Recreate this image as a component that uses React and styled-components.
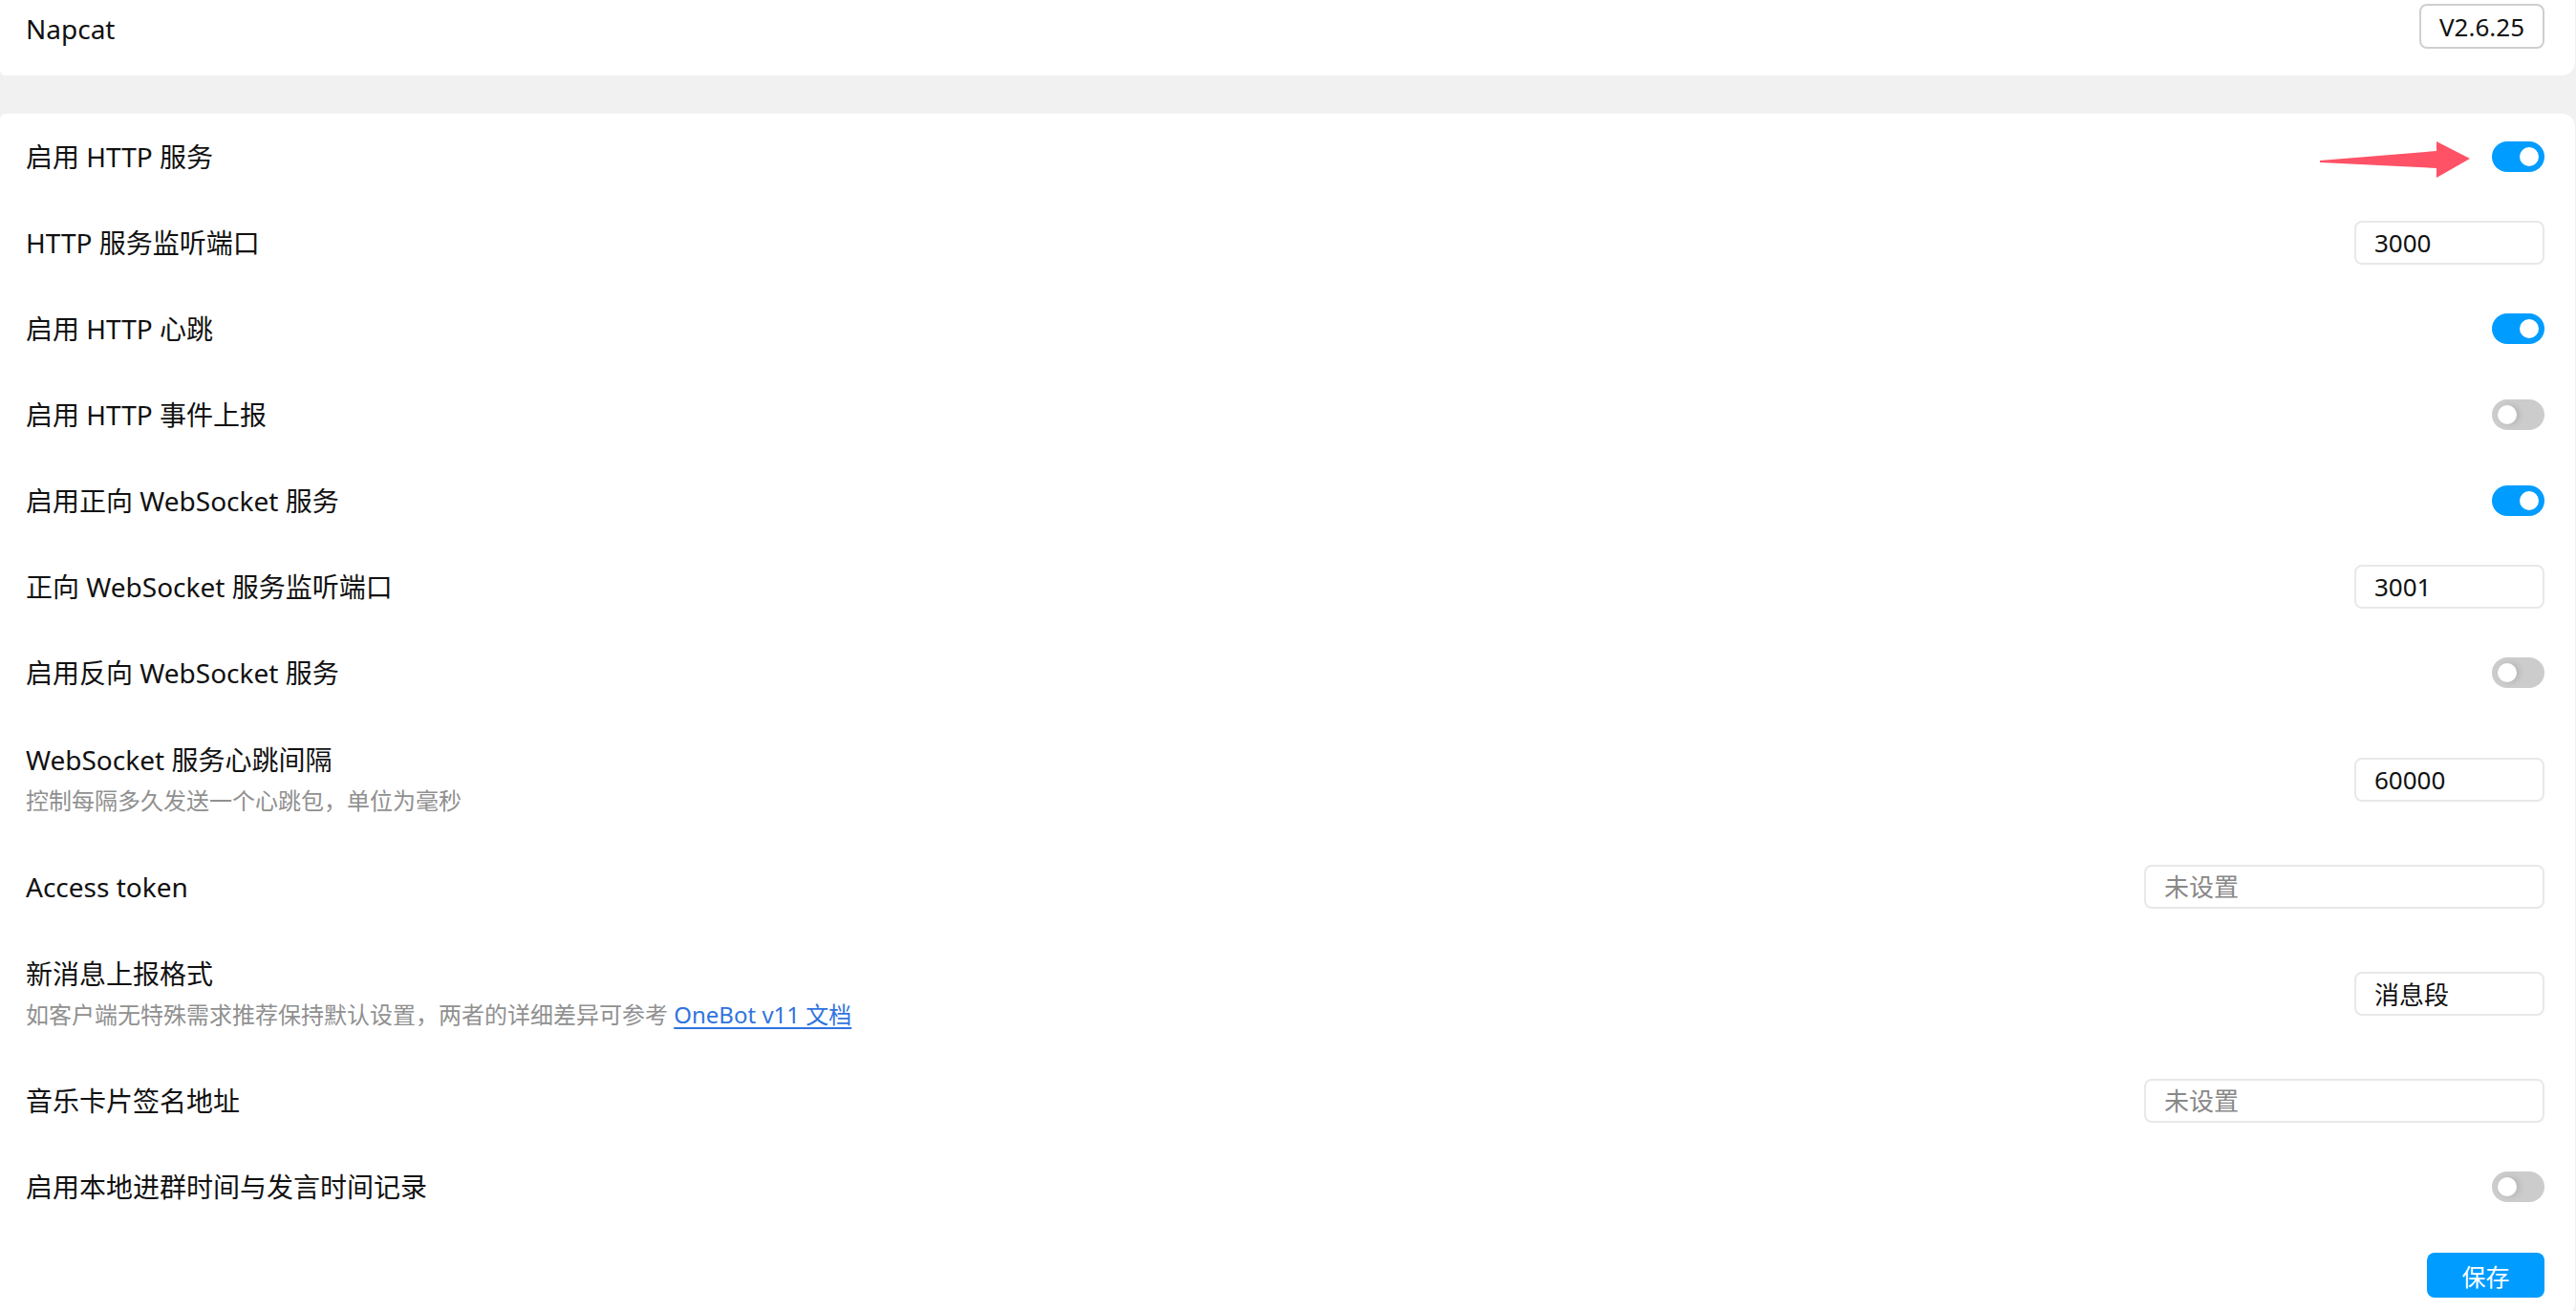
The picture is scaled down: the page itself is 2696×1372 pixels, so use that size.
// Imports
import React from "react";
import styled, { createGlobalStyle } from "styled-components";

// Settings data
const rows = [
	{ label: "启用 HTTP 服务", type: "toggle", on: true, arrow: true },
	{ label: "HTTP 服务监听端口", type: "input", value: "3000" },
	{ label: "启用 HTTP 心跳", type: "toggle", on: true },
	{ label: "启用 HTTP 事件上报", type: "toggle", on: false },
	{ label: "启用正向 WebSocket 服务", type: "toggle", on: true },
	{ label: "正向 WebSocket 服务监听端口", type: "input", value: "3001" },
	{ label: "启用反向 WebSocket 服务", type: "toggle", on: false },
	{
		label: "WebSocket 服务心跳间隔",
		desc: "控制每隔多久发送一个心跳包，单位为毫秒",
		type: "input",
		value: "60000",
	},
	{ label: "Access token", type: "input", placeholder: "未设置", wide: true },
	{
		label: "新消息上报格式",
		desc: "如客户端无特殊需求推荐保持默认设置，两者的详细差异可参考 ",
		link: "OneBot v11 文档",
		type: "input",
		value: "消息段",
	},
	{ label: "音乐卡片签名地址", type: "input", placeholder: "未设置", wide: true },
	{ label: "启用本地进群时间与发言时间记录", type: "toggle", on: false },
];

// Component
const App = () => {
	return (
		<React.Fragment>
			<GlobalStyle />
			<Page>
				<HeaderCard>
					<AppName>Napcat</AppName>
					<Version>V2.6.25</Version>
				</HeaderCard>
				<Card>
					{rows.map((row) => (
						<Row key={row.label} $double={!!row.desc}>
							<Label>
								<Title>{row.label}</Title>
								{row.desc && (
									<Desc>
										{row.desc}
										{row.link && <DocLink href="#">{row.link}</DocLink>}
									</Desc>
								)}
							</Label>
							{row.type === "toggle" ? (
								<Toggle $on={row.on}>
									<Knob $on={row.on} />
								</Toggle>
							) : (
								<TextInput
									$wide={row.wide}
									defaultValue={row.value}
									placeholder={row.placeholder}
								/>
							)}
							{/* red pointer drawn over the first row */}
							{row.arrow && (
								<Arrow width="157" height="38" viewBox="0 0 157 38">
									<polygon
										points="0,20 122,10 122,0 157,18 122,38 122,28 0,22"
										fill="#ff5266"
									/>
								</Arrow>
							)}
						</Row>
					))}
					<Actions>
						<SaveButton>保存</SaveButton>
					</Actions>
				</Card>
			</Page>
		</React.Fragment>
	);
};

// Styled
const GlobalStyle = createGlobalStyle`
	html, body{
		margin: 0;
		height: 100%;
		overflow: hidden;
		background: #f1f1f1;
	}
	body{
		font-family: "Noto Sans", "Noto Sans CJK SC", sans-serif;
		color: #111;
	}
	*{
		box-sizing: border-box;
	}
`;

const Page = styled.div`
	display: flex;
	flex-direction: column;
	gap: 40px;
	padding-right: 1px;
	min-height: 100vh;
`;

const Card = styled.div`
	background: #fff;
	border-radius: 6px 14px 14px 6px;
	flex: 1;
`;

const HeaderCard = styled(Card)`
	flex: none;
	height: 79px;
	display: flex;
	align-items: center;
	justify-content: space-between;
	padding: 0 32px 24px 27px;
	border-radius: 0 0 14px 6px;
`;

const AppName = styled.div`
	font-size: 28px;
	line-height: 44px;
	padding-top: 4px;
`;

const Version = styled.div`
	width: 131px;
	height: 47px;
	display: flex;
	align-items: center;
	justify-content: center;
	border: 2px solid #cfcfcf;
	border-radius: 8px;
	font-size: 26px;
`;

const Row = styled.div`
	position: relative;
	display: flex;
	align-items: center;
	justify-content: space-between;
	min-height: 90px;
	padding: ${(p) => (p.$double ? "24px" : "22px")} 32px;
	padding-left: 27px;
`;

const Label = styled.div`
	display: flex;
	flex-direction: column;
`;

const Title = styled.div`
	font-size: 28px;
	line-height: 44px;
`;

const Desc = styled.div`
	font-size: 24px;
	line-height: 42px;
	color: #909090;
`;

const DocLink = styled.a`
	color: #2f74e0;
	text-decoration: underline;
	text-underline-offset: 4px;
`;

const Toggle = styled.div`
	width: 55px;
	height: 32px;
	border-radius: 16px;
	background: ${(p) => (p.$on ? "#009cff" : "#cccccc")};
	display: flex;
	align-items: center;
	justify-content: ${(p) => (p.$on ? "flex-end" : "flex-start")};
	padding: 0 6px;
`;

const Knob = styled.div`
	width: 20px;
	height: 20px;
	border-radius: 50%;
	background: #fff;
	box-shadow: ${(p) => (p.$on ? "none" : "3px 0 6px rgba(0, 0, 0, 0.12)")};
`;

const TextInput = styled.input`
	width: ${(p) => (p.$wide ? "419px" : "199px")};
	height: 46px;
	border: 2px solid #e8e8e8;
	border-radius: 8px;
	padding: 0 19px;
	font-family: inherit;
	font-size: 26px;
	color: #111;
	outline: none;
	&::placeholder{
		color: #888;
	}
`;

const Arrow = styled.svg`
	position: absolute;
	top: 29px;
	right: 110px;
`;

const Actions = styled.div`
	display: flex;
	justify-content: flex-end;
	padding: 24px 32px 20px 27px;
`;

const SaveButton = styled.button`
	width: 123px;
	height: 47px;
	border: none;
	border-radius: 8px;
	background: #009cff;
	color: #fff;
	font-family: inherit;
	font-size: 25px;
`;

// Export
export default App;
